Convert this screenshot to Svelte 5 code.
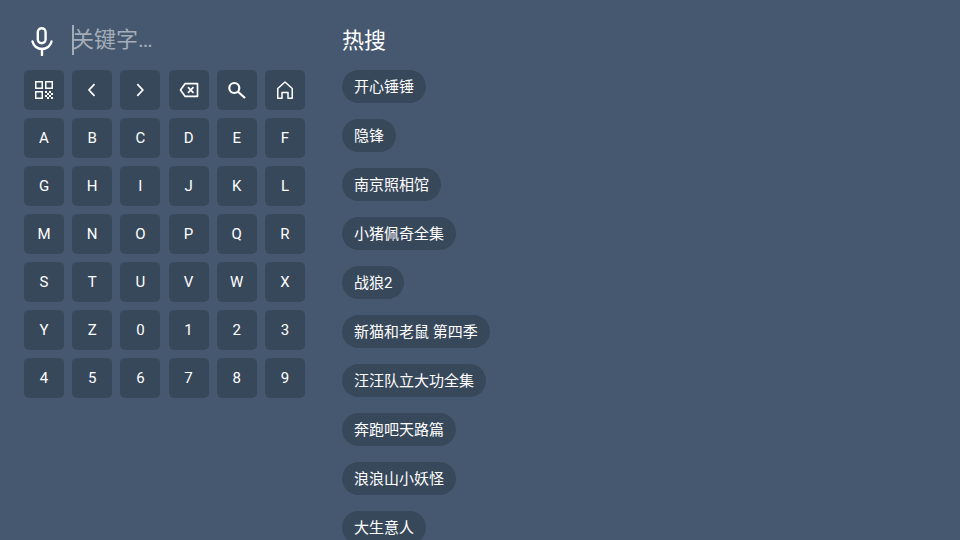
<script lang="ts">
  const keys = 'ABCDEFGHIJKLMNOPQRSTUVWXYZ0123456789'.split('');
  const hot = ['开心锤锤', '隐锋', '南京照相馆', '小猪佩奇全集', '战狼2', '新猫和老鼠 第四季', '汪汪队立大功全集', '奔跑吧天路篇', '浪浪山小妖怪', '大生意人'];
</script>

<div class="page">
  <section class="left">
    <div class="search">
      <svg class="mic" width="24" height="32" viewBox="0 0 24 32" fill="none" stroke="#fff" stroke-width="2.400">
        <rect x="7.800" y="4.200" width="7.800" height="15" rx="3.900" />
        <path d="M2.500 17.500c1 4.500 5 7.500 9.500 7.500s8.500-3 9.500-7.500" stroke-linecap="round" />
        <path d="M12 25v6" stroke-linecap="round" />
      </svg>
      <div class="input"><span class="caret"></span>关键字…</div>
    </div>
    <div class="keys">
      <button class="key" aria-label="二维码">
        <svg width="20" height="20" viewBox="0 0 20 20" fill="none" stroke="#fff" stroke-width="1.500">
          <rect x="1.750" y="1.750" width="6.500" height="6.500" />
          <rect x="11.750" y="1.750" width="6.500" height="6.500" />
          <rect x="1.750" y="11.750" width="6.500" height="6.500" />
          <path d="M11 11h2v2h-2zM15 11h2v2h-2zM13 13h2v2h-2zM17 13h2v2h-2zM11 15h2v2h-2zM15 15h2v2h-2zM13 17h2v2h-2zM17 17h2v2h-2z" fill="#fff" stroke="none" />
        </svg>
      </button>
      <button class="key" aria-label="左">
        <svg width="20" height="20" viewBox="0 0 20 20" fill="none" stroke="#fff" stroke-width="1.700"><path d="M12.500 4.200 7 10l5.500 5.800" /></svg>
      </button>
      <button class="key" aria-label="右">
        <svg width="20" height="20" viewBox="0 0 20 20" fill="none" stroke="#fff" stroke-width="1.700"><path d="M7.300 4.200 12.800 10l-5.500 5.800" /></svg>
      </button>
      <button class="key" aria-label="删除">
        <svg width="20" height="20" viewBox="0 0 20 20" fill="none" stroke="#fff" stroke-width="1.700">
          <path d="M6 3.700h12.500v12.600H6L1.500 10z" stroke-linejoin="round" />
          <path d="M9 7.200l5.500 5.600M14.500 7.200 9 12.800" />
        </svg>
      </button>
      <button class="key" aria-label="搜索">
        <svg width="20" height="20" viewBox="0 0 20 20" fill="none" stroke="#fff" stroke-width="2.200">
          <circle cx="7.300" cy="8" r="5" />
          <path d="M11 11.800l7 6.200" />
        </svg>
      </button>
      <button class="key" aria-label="首页">
        <svg width="20" height="20" viewBox="0 0 20 20" fill="none" stroke="#fff" stroke-width="1.500" stroke-linejoin="round">
          <path d="M2.750 18.250V8.500L10 2l7.250 6.500v9.750H13V12.500H7v5.750z" />
        </svg>
      </button>
      {#each keys as k}
        <button class="key">{k}</button>
      {/each}
    </div>
  </section>
  <section class="right">
    <h2>热搜</h2>
    <ul>
      {#each hot as h}
        <li>{h}</li>
      {/each}
    </ul>
  </section>
</div>

<style>
  :global(body) {
    margin: 0;
    background: #46586f;
  }

  .page {
    display: flex;
    width: 960px;
    height: 540px;
    overflow: hidden;
    background: #46586f;
    color: #fff;
    font-family: Roboto, 'Noto Sans CJK SC', sans-serif;
  }

  .left {
    width: 342px;
    padding: 24px 0 0 24px;
    box-sizing: border-box;
  }

  .search {
    display: flex;
    align-items: center;
    height: 32px;
    margin-bottom: 14px;
  }

  .mic {
    margin-left: 6px;
  }

  .input {
    position: relative;
    margin-left: 18px;
    font-size: 22px;
    line-height: 34px;
    color: #a3adb9;
  }

  .caret {
    position: absolute;
    left: 0;
    top: 2px;
    width: 2px;
    height: 30px;
    background: #a3adb9;
  }

  .keys {
    display: grid;
    grid-template-columns: repeat(6, 40px);
    justify-content: space-between;
    row-gap: 8px;
    width: 281px;
  }

  .key {
    display: flex;
    align-items: center;
    justify-content: center;
    width: 40px;
    height: 40px;
    padding: 0;
    border: 0;
    border-radius: 5px;
    background: #38485b;
    color: #fff;
    font: 400 15px Roboto, sans-serif;
  }

  .right {
    padding-top: 24px;
  }

  h2 {
    margin: 0 0 13px;
    font-size: 22px;
    font-weight: 400;
    line-height: 33px;
  }

  ul {
    display: flex;
    flex-direction: column;
    align-items: flex-start;
    gap: 16px;
    margin: 0;
    padding: 0;
    list-style: none;
  }

  li {
    height: 33px;
    padding: 0 12px;
    border-radius: 17px;
    background: #38485b;
    font-size: 15px;
    line-height: 35px;
    white-space: nowrap;
  }
</style>
